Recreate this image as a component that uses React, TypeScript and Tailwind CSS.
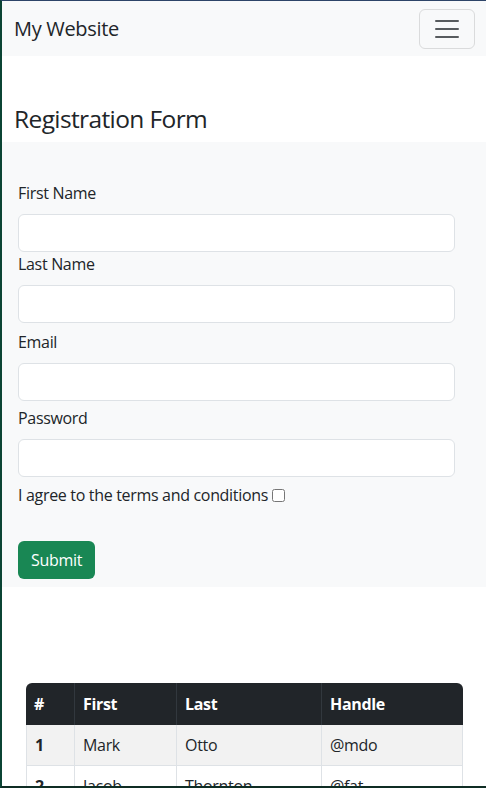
const rows = [
  { n: "1", first: "Mark", last: "Otto", handle: "@mdo" },
  { n: "2", first: "Jacob", last: "Thornton", handle: "@fat" },
  { n: "3", first: "Larry", last: "the Bird", handle: "@twitter" },
];

function Field({ label, className }: { label: string; className?: string }) {
  return (
    <div className={className}>
      <label className="block h-6 leading-6">{label}</label>
      <input
        type="text"
        className="mt-[9px] block h-[38px] w-[437px] rounded-md border border-[#dee2e6] bg-white px-3"
      />
    </div>
  );
}

export default function App() {
  return (
    <div
      className="h-[788px] overflow-hidden border-t border-b-2 border-l-2 border-t-[#2d4468] border-b-[#0f2d24] border-l-[#0b4434] bg-white text-base tracking-[-0.02em] text-[#212529]"
      style={{ fontFamily: '"Open Sans", "Noto Sans", sans-serif' }}
    >
      {/* navbar */}
      <nav className="flex h-[55px] items-center justify-between bg-[#f8f9fa] pl-3 pr-[11px]">
        <span className="text-[20px] leading-[30px]">My Website</span>
        <button className="flex h-10 w-14 items-center justify-center rounded-md border border-[#dadbdc]">
          <svg width="30" height="30" viewBox="0 0 30 30">
            <path
              d="M4 7h22M4 15h22M4 23h22"
              stroke="rgba(33,37,41,0.75)"
              strokeWidth="2"
              strokeLinecap="round"
              strokeMiterlimit="10"
            />
          </svg>
        </button>
      </nav>

      <h2 className="px-3 pt-[48px] pb-[8px] text-[24.5px] leading-[30px] font-normal tracking-[-0.025em]">
        Registration Form
      </h2>

      {/* form */}
      <form className="bg-[#f8f9fa] px-4 pt-[39px] pb-2">
        <Field label="First Name" />
        <Field label="Last Name" />
        <Field label="Email" className="mt-[7px]" />
        <Field label="Password" className="mt-[5px]" />
        <div className="mt-[6px] flex items-center leading-6">
          <span>I agree to the terms and conditions</span>
          <input type="checkbox" className="ml-1 h-[13px] w-[13px]" />
        </div>
        <button
          type="button"
          className="mt-[34px] h-[38px] rounded-md bg-[#198754] px-[13px] text-white"
        >
          Submit
        </button>
      </form>

      {/* table */}
      <div className="pt-24 pl-6">
        <table className="w-[437px] border-separate border-spacing-0 text-left">
          <thead>
            <tr className="h-[42px] bg-[#212529] font-bold text-white">
              <th className="w-[49px] rounded-tl-md border-r border-[#32383e] px-2">#</th>
              <th className="w-[102px] border-r border-[#32383e] px-2">First</th>
              <th className="w-[145px] border-r border-[#32383e] px-2">Last</th>
              <th className="rounded-tr-md px-2">Handle</th>
            </tr>
          </thead>
          <tbody>
            {rows.map((r, i) => (
              <tr key={r.n} className={i % 2 === 0 ? "h-[41px] bg-[#f2f2f2]" : "h-[41px] bg-white"}>
                <td className="border-r border-b border-l border-[#dee2e6] px-2 font-bold">{r.n}</td>
                <td className="border-r border-b border-[#dee2e6] px-2">{r.first}</td>
                <td className="border-r border-b border-[#dee2e6] px-2">{r.last}</td>
                <td className="border-r border-b border-[#dee2e6] px-2">{r.handle}</td>
              </tr>
            ))}
          </tbody>
        </table>
      </div>
    </div>
  );
}
